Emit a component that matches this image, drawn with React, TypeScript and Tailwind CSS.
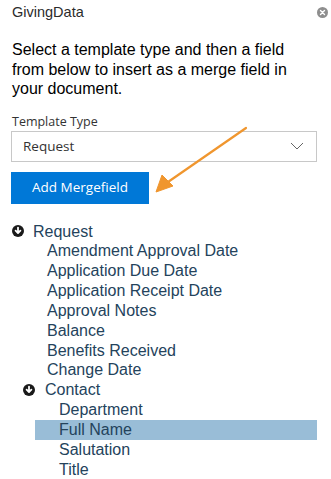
import React from "react";

const requestFields = [
  "Amendment Approval Date",
  "Application Due Date",
  "Application Receipt Date",
  "Approval Notes",
  "Balance",
  "Benefits Received",
  "Change Date",
];

const contactFields = ["Department", "Full Name", "Salutation", "Title"];

function DownCircle() {
  return (
    <svg width="12" height="12" viewBox="0 0 12 12" className="shrink-0">
      <circle cx="6" cy="6" r="6" fill="#1a1a1a" />
      <path d="M6 2.6v5.2M3.6 5.6L6 8.1l2.4-2.5" stroke="#fff" strokeWidth="1.8" fill="none" strokeLinecap="round" strokeLinejoin="round" />
    </svg>
  );
}

function CloseIcon() {
  return (
    <svg width="11" height="11" viewBox="0 0 11 11">
      <circle cx="5.5" cy="5.5" r="5.5" fill="#8e8e8e" />
      <path d="M3.5 3.5l4 4M7.5 3.5l-4 4" stroke="#fff" strokeWidth="1.4" strokeLinecap="round" />
    </svg>
  );
}

export default function App() {
  return (
    <div className="relative w-[331px] h-[479px] bg-white overflow-hidden">
      <div className="flex items-center justify-between pl-3 pr-[3px] h-[25px]">
        <span className="text-[14.5px] text-[#2b2b2b] font-['Liberation_Sans',sans-serif]">GivingData</span>
        <CloseIcon />
      </div>

      <p className="px-3 pt-[15px] text-[16px] leading-[19.5px] text-black font-['Liberation_Sans',sans-serif]">
        Select a template type and then a field from below to insert as a merge field in your document.
      </p>

      <div className="px-[11px] pt-[15px] font-['Open_Sans',sans-serif]">
        <div className="text-[12.5px] leading-[16px] text-[#333] pl-[1px]">Template Type</div>
        <div className="mt-[1px] h-[31px] border border-[#c8c8c8] flex items-center justify-between pl-[11px] pr-[12px] w-[306px]">
          <span className="text-[13.5px] text-[#333]">Request</span>
          <svg width="14" height="8" viewBox="0 0 14 8">
            <path d="M1 1l6 6 6-6" stroke="#666" strokeWidth="1" fill="none" />
          </svg>
        </div>
        <button className="mt-[10px] w-[138px] h-[32px] bg-[#0078d7] text-white text-[13.5px] flex items-center justify-center">
          Add Mergefield
        </button>
      </div>

      <div className="pt-[18px] font-['Liberation_Sans',sans-serif] text-[16px] leading-[19.85px] text-[#24435c]">
        <div className="flex items-center gap-[9px] pl-3">
          <DownCircle />
          <span>Request</span>
        </div>
        {requestFields.map((f) => (
          <div key={f} className="pl-[47px]">{f}</div>
        ))}
        <div className="flex items-center gap-[10px] pl-[23px]">
          <DownCircle />
          <span>Contact</span>
        </div>
        {contactFields.map((f) => (
          <div
            key={f}
            className={f === "Full Name" ? "ml-[35px] w-[282px] pl-[24px] bg-[#99bdd7]" : "pl-[59px]"}
          >
            {f}
          </div>
        ))}
      </div>

      <svg className="absolute left-0 top-0 pointer-events-none" width="331" height="479">
        <path d="M246 128L168 182" stroke="#f0962e" strokeWidth="2.2" strokeLinecap="round" />
        <path d="M156 192L162 175L173 186Z" fill="#f0962e" stroke="#f0962e" strokeWidth="1" strokeLinejoin="round" />
      </svg>
    </div>
  );
}
